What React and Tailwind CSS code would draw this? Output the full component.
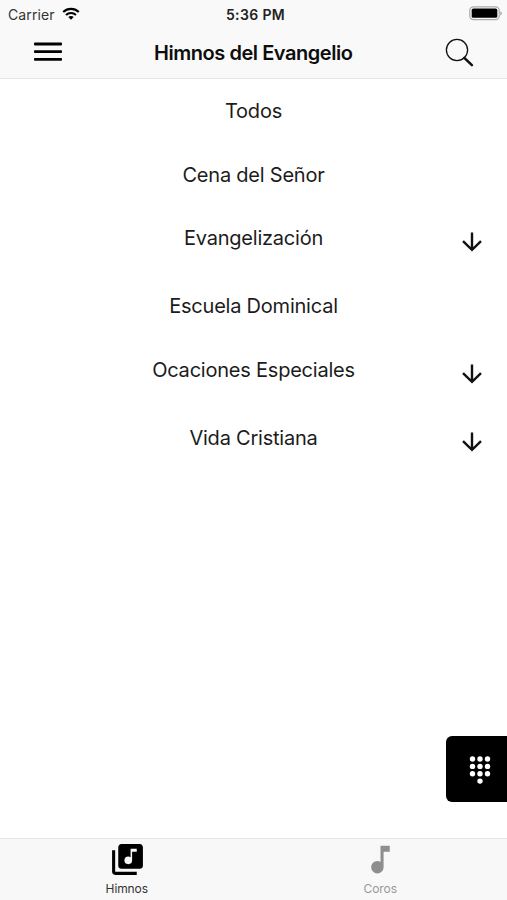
import { useState } from 'react';
import { MdLibraryMusic, MdMusicNote } from 'react-icons/md';

const categories = [
  { name: 'Todos', height: 'h-16' },
  { name: 'Cena del Señor', height: 'h-[63px]' },
  { name: 'Evangelización', height: 'h-[68px]', expandable: true },
  { name: 'Escuela Dominical', height: 'h-16' },
  { name: 'Ocaciones Especiales', height: 'h-[68px]', expandable: true },
  { name: 'Vida Cristiana', height: 'h-[68px]', expandable: true },
];

const WifiIcon = () => (
  <svg width="18" height="14" viewBox="0 0 18 14" fill="none" stroke="#000" strokeWidth="2.1">
    <path d="M1.2 5C5.6.8 12.4.8 16.8 5" />
    <path d="M4 8C6.8 5.3 11.2 5.3 14 8" />
    <path d="M9 12.8 6.3 10.1C7.8 8.7 10.2 8.7 11.7 10.1Z" fill="#000" stroke="none" />
  </svg>
);

const BatteryIcon = () => (
  <svg width="34" height="15" viewBox="0 0 34 15">
    <rect x=".8" y=".8" width="29.4" height="12.8" rx="3.6" fill="#f9f9f9" stroke="#aaa" strokeWidth="1.2" />
    <rect x="2.7" y="2.6" width="25.6" height="9.2" rx="1.6" fill="#000" />
    <path d="M31.4 5.2c1.8.6 1.8 3.6 0 4.2Z" fill="#999" />
  </svg>
);

const MenuIcon = () => (
  <svg width="28" height="20" viewBox="0 0 28 20" fill="#000">
    <rect y=".6" width="28" height="2.8" rx=".8" />
    <rect y="8.3" width="28" height="2.8" rx=".8" />
    <rect y="16" width="28" height="2.8" rx=".8" />
  </svg>
);

const SearchIcon = () => (
  <svg width="30" height="30" viewBox="0 0 30 30" fill="none" stroke="#111">
    <circle cx="12" cy="12" r="10.6" strokeWidth="1.3" />
    <path d="m19.3 19.8 7.6 7.4" strokeWidth="2.5" strokeLinecap="round" />
  </svg>
);

const ArrowDownIcon = () => (
  <svg width="20" height="20" viewBox="0 0 20 20" fill="none" stroke="#111" strokeWidth="2.4">
    <path d="M10 .4V18M1 9.2l9 8.6 9-8.6" />
  </svg>
);

const DialpadIcon = () => (
  <svg width="22" height="28" viewBox="0 0 22 28" fill="#fff">
    {[3, 10.4, 17.8].map((y) =>
      [3.5, 11, 18.5].map((x) => <circle key={`${x}-${y}`} cx={x} cy={y} r="2.7" />),
    )}
    <circle cx="11" cy="25.1" r="2.7" />
  </svg>
);

const CategoryRow = ({ category }) => (
  <li className={`relative ${category.height}`}>
    <button type="button" className="block w-full text-center text-[20px] leading-[65px] tracking-[-0.22px] text-[#1c1c1c]">
      {category.name}
    </button>
    {category.expandable && (
      <span className="pointer-events-none absolute top-[25.5px] right-[25px]">
        <ArrowDownIcon />
      </span>
    )}
  </li>
);

const TabButton = ({ label, icon: Icon, active, onClick }) => (
  <button
    type="button"
    onClick={onClick}
    className={`flex flex-1 flex-col items-center pt-0.5 ${active ? 'text-black' : 'text-[#8e8e8e]'}`}
  >
    <Icon size={37} className="ml-px" />
    <span className={`mt-[3px] text-[12px] leading-4 tracking-[-0.1px] ${active ? 'text-[#333]' : 'text-[#999]'}`}>
      {label}
    </span>
  </button>
);

const App = () => {
  const [tab, setTab] = useState('himnos');

  return (
    <div className="flex h-[900px] w-[507px] flex-col overflow-hidden bg-white font-['Inter','Liberation_Sans',sans-serif]">
      <header className="h-[79px] border-b border-[#e6e6e6] bg-[#f9f9f9]">
        {/* Status bar */}
        <div className="grid h-7 grid-cols-3 items-center pr-1 pl-2 text-[#333]">
          <div className="flex items-center gap-[7px]">
            <span className="text-[14px] tracking-[0.1px]">Carrier</span>
            <WifiIcon />
          </div>
          <span className="text-center text-[14px] font-semibold tracking-[0.35px] text-[#222]">5:36 PM</span>
          <div className="-mt-0.5 flex justify-end">
            <BatteryIcon />
          </div>
        </div>

        {/* Navigation bar */}
        <div className="flex h-[50px] items-center justify-between pr-8 pl-[33.5px]">
          <button type="button" aria-label="Menu" className="-mt-[3px]">
            <MenuIcon />
          </button>
          <h1 className="text-[20px] font-semibold tracking-[-0.45px] text-[#0d0d0d]">Himnos del Evangelio</h1>
          <button type="button" aria-label="Buscar">
            <SearchIcon />
          </button>
        </div>
      </header>

      <main className="relative flex-1">
        <ul>
          {categories.map((category) => (
            <CategoryRow key={category.name} category={category} />
          ))}
        </ul>

        {/* Number search */}
        <button
          type="button"
          aria-label="Buscar por número"
          className="absolute right-0 bottom-9 flex h-[66px] w-[61.5px] items-center justify-center rounded-l-[6px] bg-black pt-0.5 pl-[7px] text-white"
        >
          <DialpadIcon />
        </button>
      </main>

      <nav className="flex h-[62px] border-t border-[#e6e6e6] bg-[#f8f8f8]">
        <TabButton label="Himnos" icon={MdLibraryMusic} active={tab === 'himnos'} onClick={() => setTab('himnos')} />
        <TabButton label="Coros" icon={MdMusicNote} active={tab === 'coros'} onClick={() => setTab('coros')} />
      </nav>
    </div>
  );
};

export default App;
